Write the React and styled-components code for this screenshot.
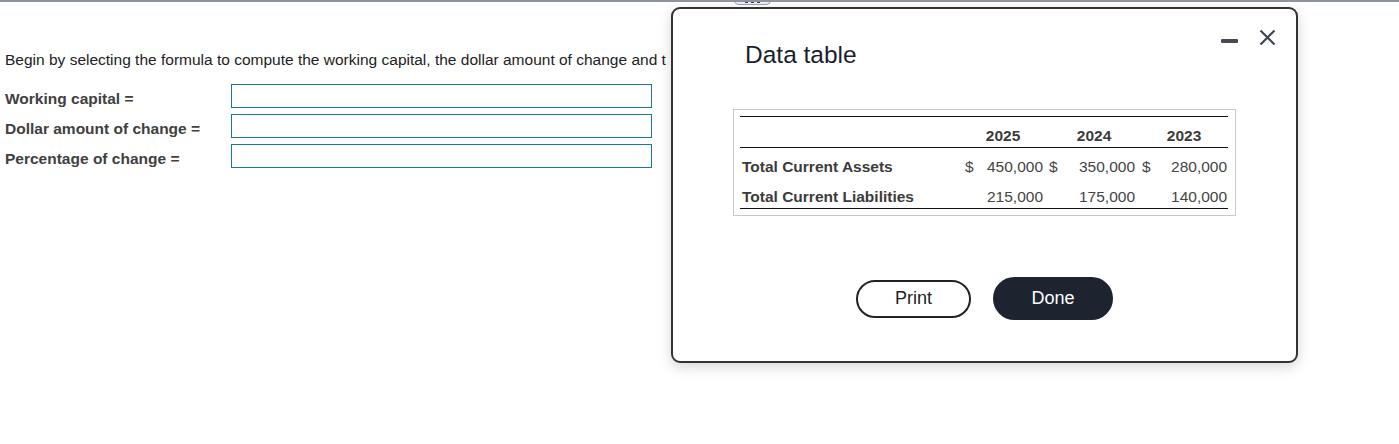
import styled, { createGlobalStyle } from "styled-components";

const GlobalStyle = createGlobalStyle`
  html, body {
    margin: 0;
    padding: 0;
    background: #fff;
    font-family: "Liberation Sans", Arial, sans-serif;
  }
`;

const Page = styled.div`
  position: relative;
  width: 1399px;
  height: 444px;
  overflow: hidden;
  border-top: 2px solid #8d93a3;
  box-sizing: border-box;
`;

const TopTab = styled.div`
  position: absolute;
  left: 734px;
  top: -2px;
  width: 37px;
  height: 5px;
  border: 1px solid #9aa0ad;
  border-top: none;
  border-radius: 0 0 6px 6px;
  background: #f1f2f4;
  display: flex;
  justify-content: center;
  align-items: flex-end;
  gap: 3px;
  padding-bottom: 1px;
  box-sizing: border-box;
`;

const Dot = styled.span`
  width: 3px;
  height: 2px;
  background: #444;
`;

const Question = styled.div`
  padding: 48px 0 0 5px;
`;

const Intro = styled.p`
  margin: 0 0 14px;
  width: 661px;
  overflow: hidden;
  font-size: 15.5px;
  line-height: 20px;
  color: #222;
  white-space: nowrap;
`;

const Fields = styled.div`
  display: grid;
  grid-template-columns: 226px 421px;
  row-gap: 6px;
`;

const Label = styled.label`
  font-size: 15.5px;
  font-weight: bold;
  color: #404040;
  align-self: center;
  padding-top: 5px;
`;

const Input = styled.input`
  height: 24px;
  box-sizing: border-box;
  border: 1px solid #15799a;
  margin: 0;
  padding: 0 4px;
  font: inherit;
  outline: none;
`;

const Modal = styled.div`
  position: absolute;
  left: 671px;
  top: 5px;
  width: 627px;
  height: 356px;
  box-sizing: border-box;
  border: 2px solid #333;
  border-radius: 9px;
  background: #fff;
  box-shadow: 0 4px 14px rgba(0, 0, 0, 0.16);
  display: flex;
  flex-direction: column;
`;

const Header = styled.div`
  display: flex;
  justify-content: space-between;
  align-items: flex-start;
  padding: 20px 20px 0 0;
`;

const Title = styled.h2`
  margin: 12px 0 0 72px;
  font-size: 24.5px;
  line-height: 28px;
  font-weight: normal;
  color: #1a1e2e;
`;

const Controls = styled.div`
  display: flex;
  align-items: center;
  gap: 21px;
  height: 17px;
`;

const Minimize = styled.span`
  display: block;
  width: 17px;
  height: 4px;
  margin-top: 6px;
  background: #454a52;
  border-radius: 1px;
`;

const Close = styled.svg`
  display: block;
  width: 17px;
  height: 17px;
`;

const TableBox = styled.div`
  margin: 40px 60px 0;
  border: 1px solid #c8c8c8;
  padding: 6px 7px 6px 6px;
`;

const Table = styled.table`
  width: 100%;
  table-layout: fixed;
  border-collapse: collapse;
  border-top: 1px solid #111;
  border-bottom: 1px solid #111;
  font-size: 15.5px;
  color: #444;
`;

const HeadCell = styled.th`
  padding: 10px 0 3px;
  line-height: 17px;
  font-weight: bold;
  color: #3b3b3b;
  text-align: center;
  border-bottom: 1px solid #111;
`;

const RowLabel = styled.td`
  padding: 10px 2px 3px 2px;
  line-height: 17px;
  font-weight: bold;
  color: #3b3b3b;
  white-space: nowrap;
`;

const Cur = styled.td`
  padding: 10px 0 3px ${(p) => p.$pad}px;
  line-height: 17px;
  text-align: left;
`;

const Num = styled.td`
  padding: 10px ${(p) => p.$pad}px 3px 0;
  line-height: 17px;
  text-align: right;
  white-space: nowrap;
`;

const Buttons = styled.div`
  display: flex;
  justify-content: center;
  align-items: center;
  gap: 22px;
  margin-top: 61px;
`;

const Button = styled.button`
  box-sizing: border-box;
  width: ${(p) => (p.$primary ? 120 : 115)}px;
  height: ${(p) => (p.$primary ? 43 : 38)}px;
  border-radius: 22px;
  border: 2px solid ${(p) => (p.$primary ? "#1e2330" : "#222")};
  background: ${(p) => (p.$primary ? "#1e2330" : "#fff")};
  color: ${(p) => (p.$primary ? "#fff" : "#222")};
  font-family: "Liberation Sans", Arial, sans-serif;
  font-size: 18px;
  cursor: pointer;
  padding: 0;
`;

const colWidths = [218, 17, 73, 18, 74, 20, 68];
const curPad = [7, 1, 2];
const numPad = [5, 5, 1];

const rows = [
  { label: "Total Current Assets", values: ["450,000", "350,000", "280,000"], dollar: true },
  { label: "Total Current Liabilities", values: ["215,000", "175,000", "140,000"], dollar: false },
];

export default function App() {
  return (
    <Page>
      <GlobalStyle />
      <Question>
        <Intro>
          Begin by selecting the formula to compute the working capital, the dollar amount of change and the percentage of change.
        </Intro>
        <Fields>
          <Label>Working capital =</Label>
          <Input />
          <Label>Dollar amount of change =</Label>
          <Input />
          <Label>Percentage of change =</Label>
          <Input />
        </Fields>
      </Question>

      <TopTab>
        <Dot />
        <Dot />
        <Dot />
      </TopTab>

      <Modal>
        <Header>
          <Title>Data table</Title>
          <Controls>
            <Minimize />
            <Close viewBox="0 0 17 17">
              <path d="M1.5 1.5 L15.5 15.5 M15.5 1.5 L1.5 15.5" stroke="#3d4754" strokeWidth="2.2" fill="none" />
            </Close>
          </Controls>
        </Header>

        <TableBox>
          <Table>
            <colgroup>
              {colWidths.map((w, i) => (
                <col key={i} style={{ width: w }} />
              ))}
            </colgroup>
            <thead>
              <tr>
                <HeadCell />
                <HeadCell colSpan={2}>2025</HeadCell>
                <HeadCell colSpan={2}>2024</HeadCell>
                <HeadCell colSpan={2}>2023</HeadCell>
              </tr>
            </thead>
            <tbody>
              {rows.map((r) => (
                <tr key={r.label}>
                  <RowLabel>{r.label}</RowLabel>
                  {r.values.flatMap((v, i) => [
                    <Cur key={"c" + i} $pad={curPad[i]}>{r.dollar ? "$" : ""}</Cur>,
                    <Num key={"n" + i} $pad={numPad[i]}>{v}</Num>,
                  ])}
                </tr>
              ))}
            </tbody>
          </Table>
        </TableBox>

        <Buttons>
          <Button>Print</Button>
          <Button $primary>Done</Button>
        </Buttons>
      </Modal>
    </Page>
  );
}
